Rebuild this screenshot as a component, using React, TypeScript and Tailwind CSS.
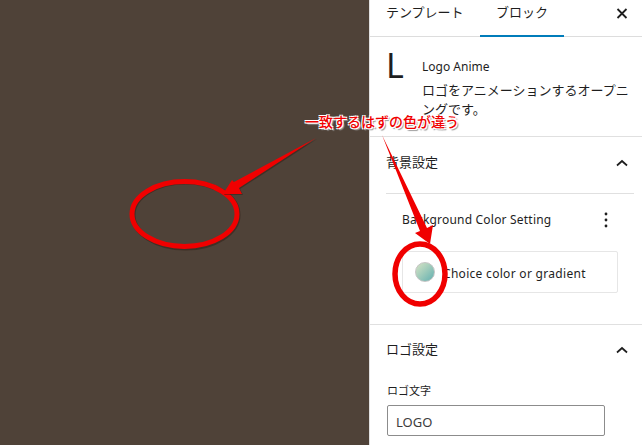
import React from 'react';

const font = { fontFamily: '"Noto Sans", "Noto Sans CJK JP", sans-serif' };

function Chevron() {
  return (
    <svg width="16" height="16" viewBox="0 0 16 16" fill="none" stroke="#1e1e1e" strokeWidth="1.7">
      <path d="M3 10.5 L8 6 L13 10.5" />
    </svg>
  );
}

function Annotations() {
  return (
    <div className="absolute inset-0 pointer-events-none">
      <svg width="642" height="445" viewBox="0 0 642 445" fill="none" className="absolute inset-0">
        <ellipse cx="185.5" cy="215" rx="52.5" ry="33" stroke="#2a1a12" strokeWidth="5" opacity="0.45" />
        <ellipse cx="184.5" cy="214" rx="52.5" ry="32.5" stroke="#f00000" strokeWidth="5" />
        <path d="M317 139 L240 189 L243 195 L224 195 L233 181 L235 183 Z" fill="#2a1a12" opacity="0.45" />
        <path d="M316 138 L239 188 L242 194 L223 194 L232 180 L234 182 Z" fill="#f00000" />
        <path d="M382 135 L427 228 L433 225 L430 244 L415 233 L420 231 Z" fill="#f00000" />
        <ellipse cx="420" cy="274" rx="25" ry="30" stroke="#f00000" strokeWidth="5.5" />
      </svg>
      <div
        className="absolute left-[305px] top-[113px] text-[14px] leading-[18px] font-medium text-[#f00000] whitespace-nowrap [text-shadow:1px_1px_0_#fff,-1px_-1px_0_#fff,1px_-1px_0_#fff,-1px_1px_0_#fff,2px_2px_1px_#999]"
        style={font}
      >
        一致するはずの色が違う
      </div>
    </div>
  );
}

export default function App() {
  return (
    <div className="relative flex h-[445px] w-[642px] overflow-hidden bg-white text-[#1e1e1e]" style={font}>
      <div className="w-[369px] shrink-0 bg-[#4f4238]" />
      <div className="flex-1 min-w-0 border-l border-[#e0e0e0] text-[13px]">
        <div className="flex h-[37px] items-start border-b border-[#dddddd] relative">
          <div className="pl-[16px] w-[110px] h-[36px] flex items-center pb-[12px] pt-[2px]">テンプレート</div>
          <div className="w-[84px] h-[37px] border-b-[2px] border-[#007cba] flex items-center justify-center pb-[12px] pt-[2px]">ブロック</div>
          <svg className="absolute right-[12px] top-[5px]" width="16" height="16" viewBox="0 0 16 16" fill="none" stroke="#1e1e1e" strokeWidth="1.8">
            <path d="M3.5 4 L12.5 13 M12.5 4 L3.5 13" />
          </svg>
        </div>

        <div className="flex h-[100px] border-b border-[#e0e0e0] pl-[16px] pt-[12px]">
          <div className="w-[36px] shrink-0 text-[34px] leading-[32px] text-[#1e1e1e]">L</div>
          <div className="w-[212px] pt-[9px]">
            <div className="text-[12px] leading-[18px]">Logo Anime</div>
            <div className="mt-[5px] text-[13px] leading-[19px]">ロゴをアニメーションするオープニングです。</div>
          </div>
        </div>

        <div className="flex h-[56px] items-center justify-between pb-[5px] pl-[16px] pr-[12px]">
          <span>背景設定</span>
          <Chevron />
        </div>
        <div className="ml-[16px] mr-[8px] border-t border-[#e0e0e0]" />
        <div className="flex h-[52px] items-center justify-between pl-[32px] pr-[34px] text-[12px] tracking-[0.2px]">
          <span>Background Color Setting</span>
          <svg width="4" height="16" viewBox="0 0 4 16" fill="#1e1e1e">
            <circle cx="2" cy="2" r="1.4" />
            <circle cx="2" cy="8" r="1.4" />
            <circle cx="2" cy="14" r="1.4" />
          </svg>
        </div>
        <div className="ml-[32px] mt-[5px] flex h-[42px] w-[216px] items-center rounded-[2px] border border-[#e6e6e6] pl-[12px] text-[12px] tracking-[0.3px]">
          <span className="h-[20px] w-[20px] shrink-0 rounded-full border border-[#c4c4c4] bg-gradient-to-br from-[#d6e4c4] to-[#5fb0b0]" />
          <span className="ml-[8px] pt-[3px]">Choice color or gradient</span>
        </div>

        <div className="mt-[31px] border-t border-[#e0e0e0]" />
        <div className="flex h-[52px] items-center justify-between pb-[2px] pl-[16px] pr-[12px]">
          <span>ロゴ設定</span>
          <Chevron />
        </div>
        <div className="pl-[17px]">
          <div className="text-[11px] leading-[16px] mt-[6px]">ロゴ文字</div>
          <div className="mt-[6px] flex h-[31px] w-[218px] items-center rounded-[2px] border border-[#8c8c8c] pl-[8px] pt-[5px] text-[13px] text-[#3c3c3c]">LOGO</div>
        </div>
      </div>
      <Annotations />
    </div>
  );
}
